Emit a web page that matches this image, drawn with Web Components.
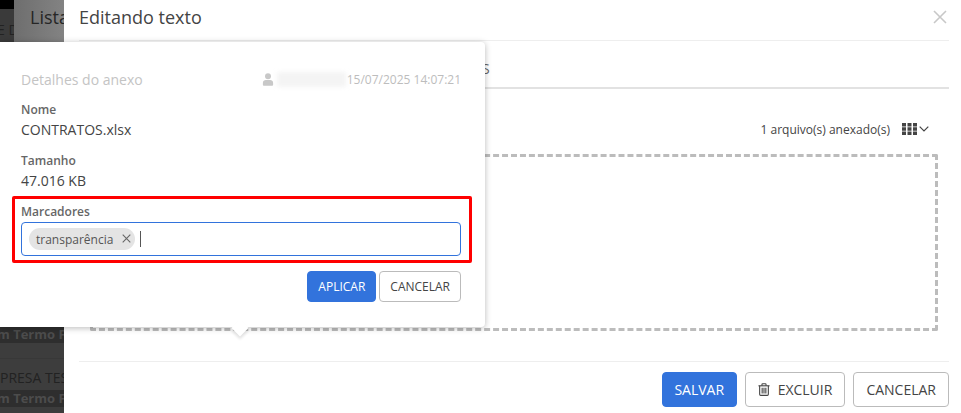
<!DOCTYPE html>
<html lang="pt">
<head>
<meta charset="utf-8">
<title>Editando texto</title>
<style>
  html, body { margin: 0; height: 100%; }
  body { width: 961px; height: 413px; overflow: hidden; font-family: "Open Sans", sans-serif; color: #444; }
</style>
</head>
<body>
<edit-page></edit-page>

<script>
const ICON_USER = `<svg width="12" height="13" viewBox="0 0 12 14"><circle cx="6" cy="3.6" r="3.2" fill="currentColor"/><path d="M0.5 13v-2.4C0.5 8.6 2 7.6 3.6 7.6h4.8c1.6 0 3.1 1 3.1 3V13c0 .5-.4.8-.9.8H1.400c-.5 0-.9-.3-.9-.8z" fill="currentColor"/></svg>`;
const ICON_TRASH = `<svg width="12" height="13" viewBox="0 0 13 14" fill="none" stroke="currentColor" stroke-width="1.2"><path d="M0.500 3h12"/><path d="M4.300 3V1.500c0-.4.300-.8.800-.8h2.800c.5 0 .8.400.8.800V3"/><path d="M1.800 3v9.200c0 .7.500 1.200 1.100 1.200h7.200c.6 0 1.100-.5 1.100-1.200V3"/><path d="M4.500 5.200v6M6.500 5.200v6M8.500 5.200v6"/></svg>`;

class UiButton extends HTMLElement {
  constructor() {
    super();
    this.attachShadow({ mode: "open" }).innerHTML = `
      <style>
        :host {
          display: inline-flex; align-items: center; justify-content: center; gap: 8px;
          box-sizing: border-box; height: 35px; padding: 0 12px;
          border: 1px solid #bbb; border-radius: 4px; background: #fff;
          color: #444; font-size: 14px; white-space: nowrap;
        }
        :host([primary]) { background: #3273dc; border-color: #3273dc; color: #fff; font-weight: 500; padding: 0 11.5px; }
        :host([small]) { height: 31px; padding: 0 10px; font-size: 12px; }
      </style>
      <slot></slot>`;
  }
}

class BackdropStrip extends HTMLElement {
  constructor() {
    super();
    this.attachShadow({ mode: "open" }).innerHTML = `
      <style>
        :host {
          display: flex; flex-direction: column; flex: none; width: 64px; height: 413px;
          overflow: hidden; background: #3c3c3c; white-space: nowrap;
        }
        .top { height: 42px; flex: none; display: flex; background: #000; }
        .side { width: 14px; height: 33px; margin-top: 9px; background: #3a3a3a; color: #222; font-size: 14px; line-height: 42px; overflow: hidden; text-indent: -3px; }
        .title { flex: 1; background: linear-gradient(90deg, #6e6e6e, #838383); color: #262626; font-size: 18px; line-height: 34px; overflow: hidden; }
        .title span { margin-left: 16px; }
        .fill { height: 285px; flex: none; }
        .band { height: 16px; flex: none; background: #2e2e2e; color: #4c4c4c; font-size: 13px; font-weight: 700; line-height: 15px; overflow: hidden; text-indent: -3px; }
        .band:last-child { height: 17px; line-height: 17px; }
        .row { height: 47px; flex: none; box-sizing: border-box; background: linear-gradient(#3d3d3d 15px, #383838 15px, #383838 16px, #3d3d3d 16px); color: #222; font-size: 14px; line-height: 70px; overflow: hidden; }
      </style>
      <div class="top"><div class="side">E D</div><div class="title"><span>Lista</span></div></div>
      <div class="fill"></div>
      <div class="band">m Termo Fo</div>
      <div class="row">PRESA TESTE</div>
      <div class="band">m Termo Fo</div>`;
  }
}

class AttachPopover extends HTMLElement {
  constructor() {
    super();
    this.attachShadow({ mode: "open" }).innerHTML = `
      <style>
        :host {
          position: absolute; left: 0; top: 42px; width: 485px; height: 285px;
          box-sizing: border-box; padding: 28px 24px 0 21px; background: #fff;
          border-radius: 0 4px 4px 0; box-shadow: 0 1px 6px rgba(0,0,0,.28);
          color: #444; font-size: 14px;
        }
        :host::after {
          content: ""; position: absolute; left: 234px; bottom: -7px; width: 12px; height: 12px;
          background: #fff; transform: rotate(45deg); box-shadow: 2px 2px 3px rgba(0,0,0,.12);
        }
        .head { display: flex; align-items: center; justify-content: space-between; height: 18px; color: #c4c4c4; }
        .head h4 { margin: 0; font-size: 14px; font-weight: 400; }
        .meta { display: flex; align-items: center; font-size: 12px; color: #bdbdbd; }
        .meta svg { color: #c8c8c8; margin-right: 3px; }
        .blur { width: 69px; height: 15px; margin-right: 1px; background: #f4f4f4; filter: blur(2px); }
        .field { margin-top: 14px; }
        .field + .field { margin-top: 11px; }
        .label { font-size: 12px; font-weight: 600; color: #666; line-height: 16px; }
        .value { font-size: 14px; line-height: 24px; color: #444; }
        .mark {
          margin: 3px -11px 0 -9px; padding: 5px 8px 4px 6px;
          border: 3px solid #f00; border-radius: 2px;
        }
        .mark .label { line-height: 15px; }
        .input {
          display: flex; align-items: center; height: 34px; box-sizing: border-box; margin-top: 3px;
          padding: 0 7px; border: 1px solid #3273dc; border-radius: 4px;
        }
        .chip {
          display: inline-flex; align-items: center; height: 22px; padding: 0 4px 0 7px; gap: 9px;
          border-radius: 11px; background: #e4e4e4; color: #555; font-size: 12px;
        }
        .chip svg { display: block; margin-top: -1px; }
        .caret { width: 1px; height: 16px; margin-left: 5px; background: #555; }
        .actions { display: flex; justify-content: flex-end; gap: 3px; margin-top: 8px; }
      </style>
      <div class="head">
        <h4>Detalhes do anexo</h4>
        <div class="meta">${ICON_USER}<span class="blur"></span><span>15/07/2025 14:07:21</span></div>
      </div>
      <div class="field"><div class="label">Nome</div><div class="value">CONTRATOS.xlsx</div></div>
      <div class="field"><div class="label">Tamanho</div><div class="value">47.016 KB</div></div>
      <div class="mark">
        <div class="label">Marcadores</div>
        <div class="input">
          <span class="chip">transparência
            <svg width="9" height="9" viewBox="0 0 9 9" stroke="#666" stroke-width="1.100"><path d="M.7.7l7.600 7.600M8.300.7L.7 8.300"/></svg>
          </span>
          <span class="caret"></span>
        </div>
      </div>
      <div class="actions">
        <ui-button primary small>APLICAR</ui-button>
        <ui-button small>CANCELAR</ui-button>
      </div>`;
  }
}

class EditDialog extends HTMLElement {
  constructor() {
    super();
    this.attachShadow({ mode: "open" }).innerHTML = `
      <style>
        :host {
          display: flex; flex-direction: column; flex: 1; box-sizing: border-box; height: 413px;
          padding: 0 12px 0 15px; background: #fff; color: #444;
        }
        header { display: flex; align-items: center; justify-content: space-between; flex: none; height: 41px; box-sizing: border-box; padding-bottom: 6px; border-bottom: 1px solid #eee; }
        h2 { margin: 0; font-size: 18px; font-weight: 400; color: #444; }
        header svg { display: block; margin-right: 2px; }
        .tabs { flex: none; height: 48px; box-sizing: border-box; border-bottom: 2px solid #e2e2e2; }
        .tabs span { display: block; margin-left: 406px; font-size: 14px; line-height: 55px; color: #666; overflow: hidden; height: 46px; text-indent: -3px; }
        .count { display: flex; align-items: center; justify-content: flex-end; gap: 12px; flex: none; height: 65px; padding: 15px 20px 0 0; box-sizing: border-box; font-size: 12px; color: #444; }
        .view { display: flex; align-items: center; gap: 2px; }
        .drop { flex: none; height: 177px; margin: 0 11px 0 11px; box-sizing: border-box; border: 3px dashed #bcbcbc; border-radius: 2px; }
        footer { flex: none; margin-top: 30px; height: 46px; box-sizing: border-box; border-top: 1px solid #eee; display: flex; align-items: flex-end; justify-content: flex-end; gap: 8px; }
      </style>
      <header>
        <h2>Editando texto</h2>
        <svg width="14" height="14" viewBox="0 0 14 14" stroke="#c8c8c8" stroke-width="1.600"><path d="M1 1l12 12M13 1L1 13"/></svg>
      </header>
      <div class="tabs"><span>S</span></div>
      <div class="count">
        <span>1 arquivo(s) anexado(s)</span>
        <span class="view">
          <svg width="15" height="12" viewBox="0 0 15 12" fill="#444"><path d="M0 0h4v3.500H0zM5.500 0h4v3.500h-4zM11 0h4v3.500h-4zM0 4.300h4v3.500H0zM5.500 4.300h4v3.500h-4zM11 4.300h4v3.500h-4zM0 8.600h4V12H0zM5.500 8.600h4V12h-4zM11 8.600h4V12h-4z"/></svg>
          <svg width="10" height="6" viewBox="0 0 10 6" fill="none" stroke="#444" stroke-width="1.200"><path d="M.7.7L5 5l4.300-4.300"/></svg>
        </span>
      </div>
      <div class="drop"></div>
      <footer>
        <ui-button primary>SALVAR</ui-button>
        <ui-button>${ICON_TRASH}EXCLUIR</ui-button>
        <ui-button>CANCELAR</ui-button>
      </footer>`;
  }
}

class EditPage extends HTMLElement {
  constructor() {
    super();
    this.attachShadow({ mode: "open" }).innerHTML = `
      <style>
        :host { display: flex; position: relative; width: 961px; height: 413px; overflow: hidden; }
      </style>
      <backdrop-strip></backdrop-strip>
      <edit-dialog></edit-dialog>
      <attach-popover></attach-popover>`;
  }
}

customElements.define("ui-button", UiButton);
customElements.define("backdrop-strip", BackdropStrip);
customElements.define("attach-popover", AttachPopover);
customElements.define("edit-dialog", EditDialog);
customElements.define("edit-page", EditPage);
</script>
</body>
</html>
